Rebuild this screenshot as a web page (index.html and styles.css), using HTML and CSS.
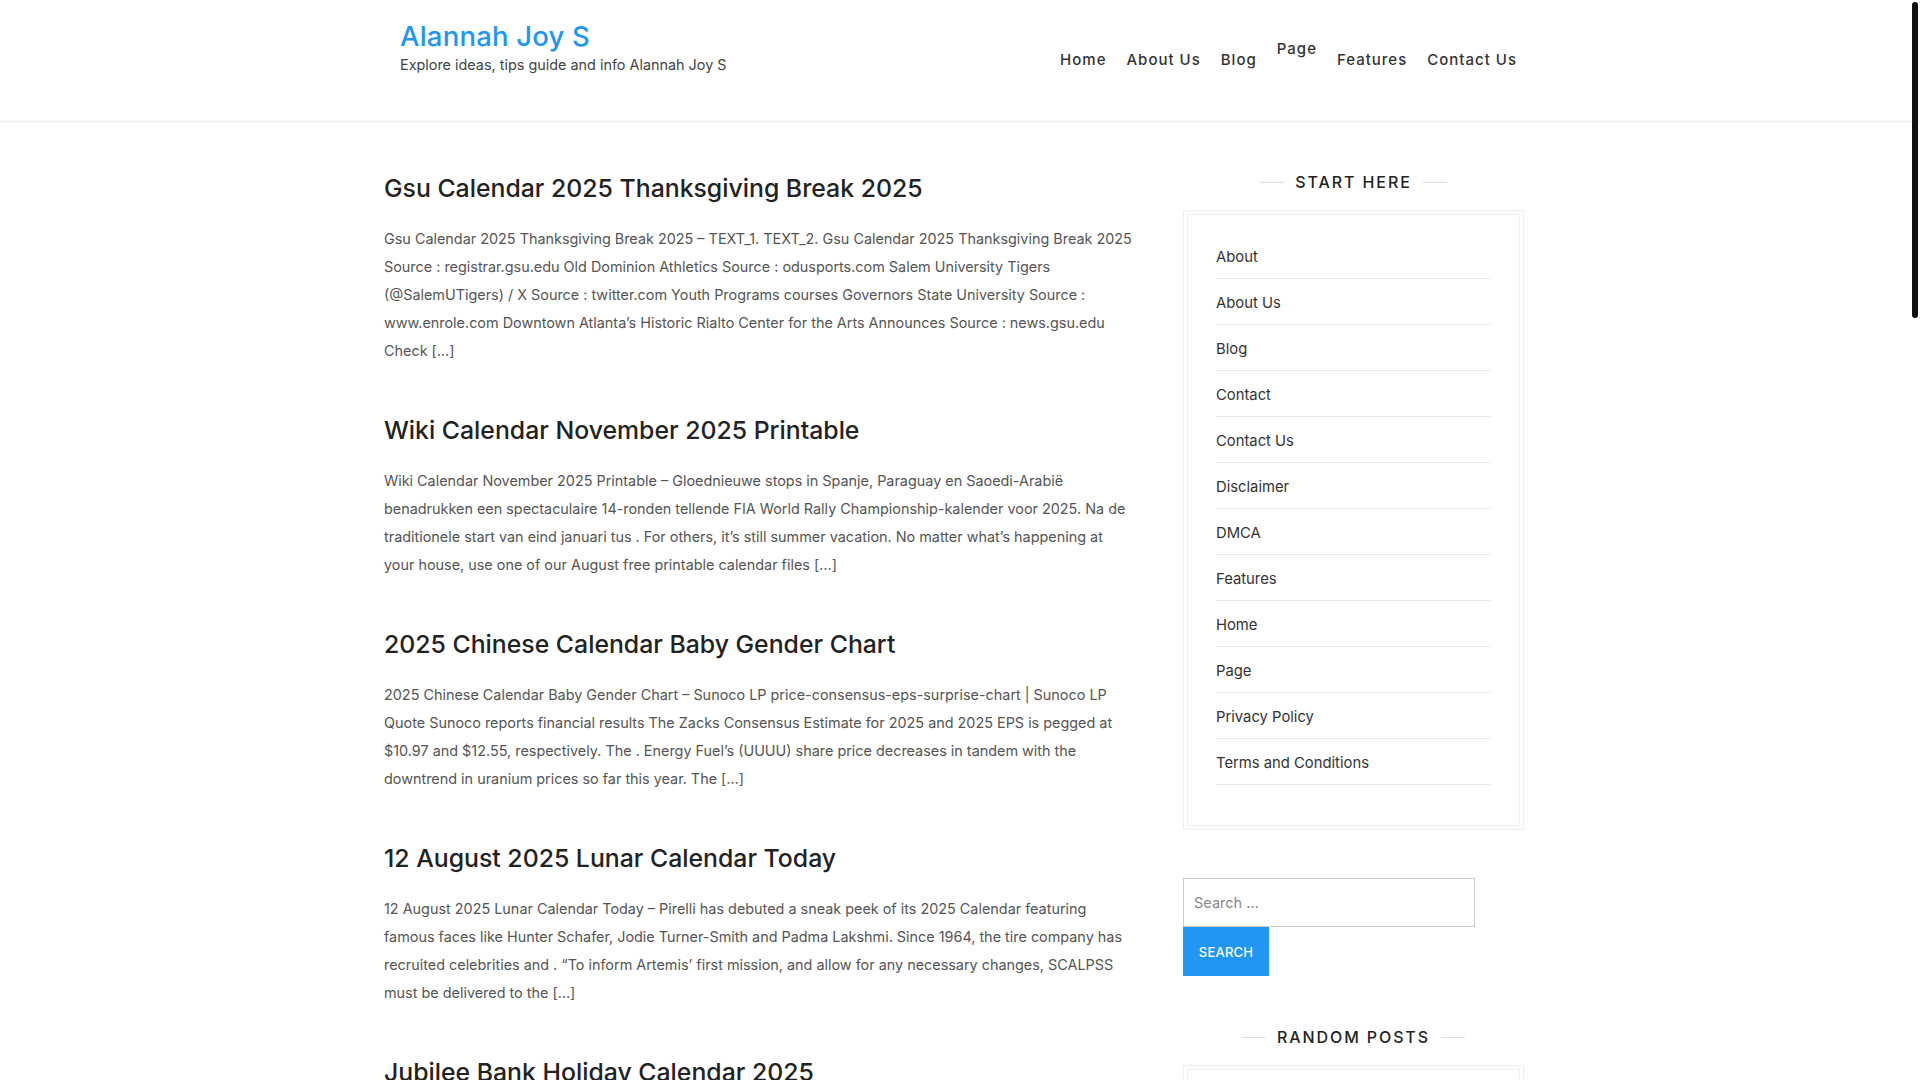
FILE: index.html
```html
<!DOCTYPE html>
<html lang="en">
<head>
<meta charset="utf-8">
<title>Alannah Joy S</title>
<link rel="stylesheet" href="styles.css">
</head>
<body>
<div class="scroll-thumb" aria-hidden="true"></div>
<header class="site-header">
  <div class="container header-inner">
    <div class="branding">
      <a class="site-title" href="#">Alannah Joy S</a>
      <p class="site-tagline">Explore ideas, tips guide and info Alannah Joy S</p>
    </div>
    <nav class="main-nav">
      <a href="#">Home</a>
      <a href="#">About Us</a>
      <a href="#">Blog</a>
      <a href="#" class="raised">Page</a>
      <a href="#">Features</a>
      <a href="#">Contact Us</a>
    </nav>
  </div>
</header>

<div class="container content">
  <main class="posts">
    <article class="post">
      <h2 class="post-title"><a href="#">Gsu Calendar 2025 Thanksgiving Break 2025</a></h2>
      <p class="excerpt">Gsu Calendar 2025 Thanksgiving Break 2025 – TEXT_1. TEXT_2. Gsu Calendar 2025 Thanksgiving Break 2025 Source : registrar.gsu.edu Old Dominion Athletics Source : odusports.com Salem University Tigers (@SalemUTigers) / X Source : twitter.com Youth Programs courses Governors State University Source : www.enrole.com Downtown Atlanta’s Historic Rialto Center for the Arts Announces Source : news.gsu.edu Check […]</p>
    </article>
    <article class="post">
      <h2 class="post-title"><a href="#">Wiki Calendar November 2025 Printable</a></h2>
      <p class="excerpt">Wiki Calendar November 2025 Printable – Gloednieuwe stops in Spanje, Paraguay en Saoedi-Arabië benadrukken een spectaculaire 14-ronden tellende FIA World Rally Championship-kalender voor 2025. Na de traditionele start van eind januari tus . For others, it’s still summer vacation. No matter what’s happening at your house, use one of our August free printable calendar files […]</p>
    </article>
    <article class="post">
      <h2 class="post-title"><a href="#">2025 Chinese Calendar Baby Gender Chart</a></h2>
      <p class="excerpt">2025 Chinese Calendar Baby Gender Chart – Sunoco LP price-consensus-eps-surprise-chart | Sunoco LP Quote Sunoco reports financial results The Zacks Consensus Estimate for 2025 and 2025 EPS is pegged at $10.97 and $12.55, respectively. The . Energy Fuel’s (UUUU) share price decreases in tandem with the downtrend in uranium prices so far this year. The […]</p>
    </article>
    <article class="post">
      <h2 class="post-title"><a href="#">12 August 2025 Lunar Calendar Today</a></h2>
      <p class="excerpt">12 August 2025 Lunar Calendar Today – Pirelli has debuted a sneak peek of its 2025 Calendar featuring famous faces like Hunter Schafer, Jodie Turner-Smith and Padma Lakshmi. Since 1964, the tire company has recruited celebrities and . “To inform Artemis’ first mission, and allow for any necessary changes, SCALPSS must be delivered to the […]</p>
    </article>
    <article class="post">
      <h2 class="post-title"><a href="#">Jubilee Bank Holiday Calendar 2025</a></h2>
      <p class="excerpt">Jubilee Bank Holiday Calendar 2025 – The UK is set to enjoy a number of bank holidays throughout the year, with families planning trips and days out. Here is everything you need to know about the dates, including when the next long weekend falls and how the schedule compares with previous years. Plan ahead with our printable calendar […]</p>
    </article>
    <article class="post">
      <h2 class="post-title"><a href="#">Ucf Academic Calendar Spring 2025</a></h2>
      <p class="excerpt">Ucf Academic Calendar Spring 2025 – The University of Central Florida has released important dates for the upcoming semester, including the first day of classes, add and drop deadlines, spring break and final examinations. Students are encouraged to review the schedule early so they can plan their courses and registration […]</p>
    </article>
    <article class="post">
      <h2 class="post-title"><a href="#">Printable Calendar 2025 With Holidays</a></h2>
      <p class="excerpt">Printable Calendar 2025 With Holidays – Keep track of every important date with a simple printable calendar that includes federal holidays, observances and school breaks. Download the monthly or yearly layout, print it at home and hang it on your fridge or office wall so the whole family stays organized all year long […]</p>
    </article>
    <article class="post">
      <h2 class="post-title"><a href="#">Moon Calendar 2025 October</a></h2>
      <p class="excerpt">Moon Calendar 2025 October – The October sky offers a full moon, a new moon and several bright planets that are easy to spot with the naked eye. Check the lunar phases for each night of the month, find the best times for stargazing and learn why the harvest moon has fascinated people for centuries […]</p>
    </article>
    <article class="post">
      <h2 class="post-title"><a href="#">Nfl Calendar 2025 Season Schedule</a></h2>
      <p class="excerpt">Nfl Calendar 2025 Season Schedule – The league has announced the full schedule for the coming season, including opening night, the international games, the holiday matchups and the final week of the regular season. Find out when your favourite team plays and which primetime games are worth circling on the calendar […]</p>
    </article>
    <article class="post">
      <h2 class="post-title"><a href="#">School Calendar 2025 To 2026</a></h2>
      <p class="excerpt">School Calendar 2025 To 2026 – Districts across the country have published their calendars for the next academic year, with start dates, winter break, spring break and the last day of school. Parents can use these dates to plan vacations, childcare and family events well in advance of the new school year […]</p>
    </article>
    <article class="post">
      <h2 class="post-title"><a href="#">Blank Calendar 2025 Monthly Template</a></h2>
      <p class="excerpt">Blank Calendar 2025 Monthly Template – A blank monthly template gives you plenty of room to write appointments, birthdays, deadlines and reminders. Choose between portrait and landscape layouts, start the week on Sunday or Monday and print as many copies as you need for home, school or the office […]</p>
    </article>
    <article class="post">
      <h2 class="post-title"><a href="#">Hindu Calendar 2025 Festivals List</a></h2>
      <p class="excerpt">Hindu Calendar 2025 Festivals List – From Makar Sankranti and Holi to Navratri and Diwali, the year is full of colourful celebrations. This list brings together the major festivals, fasting days and auspicious dates so you can prepare for each occasion with your family and community […]</p>
    </article>
    <nav class="pagination">
      <span class="current">1</span>
      <a href="#">2</a>
      <a href="#">3</a>
      <span class="dots">…</span>
      <a href="#">Next</a>
    </nav>
  </main>

  <aside class="sidebar">
    <section class="widget">
      <h3 class="widget-title"><span>Start Here</span></h3>
      <div class="widget-box">
        <ul class="widget-list">
          <li><a href="#">About</a></li>
          <li><a href="#">About Us</a></li>
          <li><a href="#">Blog</a></li>
          <li><a href="#">Contact</a></li>
          <li><a href="#">Contact Us</a></li>
          <li><a href="#">Disclaimer</a></li>
          <li><a href="#">DMCA</a></li>
          <li><a href="#">Features</a></li>
          <li><a href="#">Home</a></li>
          <li><a href="#">Page</a></li>
          <li><a href="#">Privacy Policy</a></li>
          <li><a href="#">Terms and Conditions</a></li>
        </ul>
      </div>
    </section>
    <section class="widget widget-search">
      <form class="search-form">
        <input class="search-field" type="search" placeholder="Search …">
        <button class="search-submit" type="button">Search</button>
      </form>
    </section>
    <section class="widget">
      <h3 class="widget-title"><span>Random Posts</span></h3>
      <div class="widget-box">
        <ul class="widget-list">
          <li><a href="#">Moon Calendar 2025 October</a></li>
          <li><a href="#">Printable Calendar 2025 With Holidays</a></li>
          <li><a href="#">School Calendar 2025 To 2026</a></li>
          <li><a href="#">Nfl Calendar 2025 Season Schedule</a></li>
          <li><a href="#">Hindu Calendar 2025 Festivals List</a></li>
        </ul>
      </div>
    </section>
  </aside>
</div>

<footer class="site-footer">
  <div class="container">
    <p>Copyright © 2025 Alannah Joy S. All rights reserved.</p>
  </div>
</footer>
</body>
</html>
```

FILE: styles.css
```css
html { background: #fff; }

body {
  margin: 0;
  padding-right: 12px;
  font-family: Inter, "Open Sans", sans-serif;
  color: #555;
  background: #fff;
}
a { text-decoration: none; color: inherit; }

/* browser scrollbar thumb as seen in the reference */
.scroll-thumb {
  position: fixed;
  top: 2px;
  right: 2px;
  width: 6px;
  height: 316px;
  border-radius: 3px;
  background: #111;
}

.container {
  width: 1140px;
  margin: 0 auto;
}

.site-header {
  background: #fff;
  border-bottom: 1px solid #eee;
  margin-right: -12px;
  padding-right: 12px;
}
.header-inner {
  height: 121px;
  display: flex;
  justify-content: space-between;
  align-items: flex-start;
}
.branding { padding: 17px 0 0 16px; }
.site-title {
  display: block;
  font-size: 27.5px;
  font-weight: 500;
  color: #2196f3;
  line-height: 38px;
  letter-spacing: 0.2px;
}
.site-tagline {
  margin: 0;
  font-size: 14.4px;
  line-height: 20px;
  color: #444;
}

.main-nav {
  display: flex;
  padding-top: 48px;
  margin-right: -3px;
}
.main-nav a {
  padding: 0 10px;
  font-size: 15px;
  font-weight: 500;
  letter-spacing: 1px;
  line-height: 24px;
  color: #333;
}
.main-nav a.raised { margin-top: -11px; }

.content {
  display: grid;
  grid-template-columns: 752px 341px;
  justify-content: space-between;
  padding-top: 49px;
}

.post { margin-bottom: 48px; }
.post-title {
  margin: 0 0 20px;
  font-size: 24.8px;
  font-weight: 500;
  line-height: 34px;
  color: #222;
}
.excerpt {
  margin: 0;
  font-size: 14.4px;
  line-height: 28px;
  color: #555;
}

.pagination {
  display: flex;
  gap: 8px;
  margin-bottom: 60px;
  font-size: 15px;
}
.pagination a, .pagination span {
  padding: 8px 14px;
  border: 1px solid #eee;
  color: #333;
}
.pagination .current { background: #2196f3; border-color: #2196f3; color: #fff; }

.sidebar { display: flex; flex-direction: column; }
.widget { margin-bottom: 48px; }
.widget-search { margin-bottom: 50px; }
.widget-title {
  margin: 0 0 17px;
  display: flex;
  justify-content: center;
  align-items: center;
  gap: 11px;
  font-size: 16px;
  font-weight: 500;
  letter-spacing: 1.9px;
  text-transform: uppercase;
  line-height: 22px;
  color: #222;
}
.widget-title::before, .widget-title::after {
  content: "";
  width: 24px;
  height: 1px;
  background: #ddd;
}
.widget-box {
  border: 1px solid #eee;
  padding: 3px;
}
.widget-list {
  list-style: none;
  margin: 0;
  border: 1px solid #eee;
  padding: 18px 28px 40px;
}
.widget-list li {
  padding: 12px 0 9px;
  line-height: 24px;
  font-size: 14.8px;
  color: #333;
  border-bottom: 1px solid #e8e8e8;
}

.search-form { display: flex; flex-direction: column; align-items: flex-start; }
.search-field {
  box-sizing: border-box;
  width: 292px;
  height: 49px;
  margin: 0;
  padding: 0 10px;
  border: 1px solid #ccc;
  border-radius: 0;
  background: #fff;
  font-family: inherit;
  font-size: 14.5px;
  color: #555;
  outline: none;
}
.search-field::placeholder { color: #888; }
.search-submit {
  width: 86px;
  height: 49px;
  border: 0;
  border-radius: 0;
  background: #2196f3;
  color: #fff;
  font-family: inherit;
  font-size: 13px;
  font-weight: 500;
  text-transform: uppercase;
  letter-spacing: 0.2px;
}

.site-footer {
  border-top: 1px solid #eee;
  background: #fff;
  padding: 30px 0;
  text-align: center;
  font-size: 14px;
  color: #666;
}
.site-footer p { margin: 0; }
```
